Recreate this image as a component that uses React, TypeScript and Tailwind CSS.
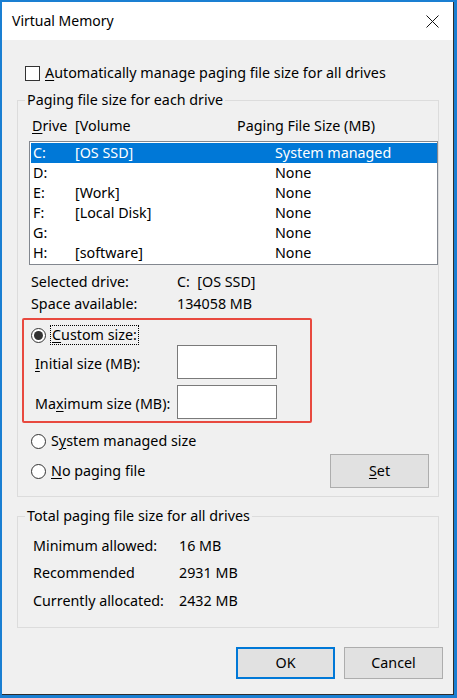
import type { ReactNode } from 'react';

const drives = [
    { drive: 'C:', volume: '[OS SSD]', size: 'System managed' },
    { drive: 'D:', volume: '', size: 'None' },
    { drive: 'E:', volume: '[Work]', size: 'None' },
    { drive: 'F:', volume: '[Local Disk]', size: 'None' },
    { drive: 'G:', volume: '', size: 'None' },
    { drive: 'H:', volume: '[software]', size: 'None' },
];

function U({ children }: { children: ReactNode }) {
    return <span className="underline decoration-1 underline-offset-[2px]">{children}</span>;
}

function Radio({ checked = false }: { checked?: boolean }) {
    return (
        <span className="w-[15px] h-[15px] rounded-full border border-[#333] bg-white flex items-center justify-center shrink-0">
            {checked && <span className="w-[9px] h-[9px] rounded-full bg-[#333]" />}
        </span>
    );
}

function App() {
    return (
        <div className="w-[457px] h-[698px] bg-[#1a7fd2] pt-[2px] pl-[2px] pr-[3px] pb-[3px] font-['Noto_Sans',sans-serif] text-[14.3px] leading-[20px] text-black">
            <div className="w-full h-full flex flex-col bg-[#f0f0f0] border-r border-b border-[#2d2d2d]">
                {/* Title bar */}
                <div className="h-[38px] bg-white flex items-center justify-between pl-[10px] pr-[14px] shrink-0">
                    <span className="text-[14px]">Virtual Memory</span>
                    <svg width="13" height="13" viewBox="0 0 13 13" className="text-[#111]">
                        <path d="M0.5 0.5 L12.5 12.5 M12.5 0.5 L0.5 12.5" stroke="currentColor" strokeWidth="1" />
                    </svg>
                </div>

                {/* Auto manage checkbox */}
                <div className="flex items-center mt-[23px] ml-[23px] h-[20px]">
                    <span className="w-[15px] h-[15px] border border-[#333] bg-white shrink-0" />
                    <span className="ml-[5px]">
                        <U>A</U>utomatically manage paging file size for all drives
                    </span>
                </div>

                {/* Paging file size for each drive */}
                <fieldset className="ml-[15px] w-[422px] mt-[7px] border border-[#dcdcdc] pb-[8px]">
                    <legend className="ml-[7px] px-[2px] leading-[20px]">Paging file size for each drive</legend>

                    <div className="grid grid-cols-[43px_162px_1fr] pl-[14px] mt-[6px] h-[20px]">
                        <span>
                            <U>D</U>rive
                        </span>
                        <span>[Volume</span>
                        <span>Paging File Size (MB)</span>
                    </div>

                    <div className="ml-[11px] w-[409px] mt-[5px] border border-[#82878f] bg-white p-[1px] pr-0">
                        {drives.map((d, i) => (
                            <div
                                key={d.drive}
                                className={`grid grid-cols-[42px_200px_1fr] pl-[2px] h-[20px] ${
                                    i === 0 ? 'bg-[#0078d7] text-white' : ''
                                }`}
                            >
                                <span>{d.drive}</span>
                                <span>{d.volume}</span>
                                <span>{d.size}</span>
                            </div>
                        ))}
                    </div>

                    <div className="flex ml-[13px] mt-[7px] h-[20px]">
                        <span className="w-[146px]">Selected drive:</span>
                        <span>C:&nbsp;&nbsp;[OS SSD]</span>
                    </div>
                    <div className="flex ml-[13px] mt-[2px] h-[20px]">
                        <span className="w-[146px]">Space available:</span>
                        <span>134058 MB</span>
                    </div>

                    {/* Highlighted custom size block */}
                    <div className="ml-[4px] w-[290px] mt-[4px] border-2 border-[#e8493f] rounded-[2px] pb-[2px]">
                        <div className="flex items-center pl-[7px] mt-[5px] h-[20px]">
                            <Radio checked />
                            <span className="ml-[4px] px-[1px] border border-dotted border-black leading-[18px]">
                                <U>C</U>ustom size:
                            </span>
                        </div>
                        <div className="flex items-center ml-[11px]">
                            <span className="w-[142px] pt-[3px]">
                                <U>I</U>nitial size (MB):
                            </span>
                            <div className="w-[100px] h-[34px] bg-white border border-[#7a7a7a]" />
                        </div>
                        <div className="flex items-center ml-[11px] mt-[6px]">
                            <span className="w-[142px] pt-[3px]">
                                Ma<U>x</U>imum size (MB):
                            </span>
                            <div className="w-[100px] h-[34px] bg-white border border-[#7a7a7a]" />
                        </div>
                    </div>

                    <div className="flex items-center ml-[13px] mt-[8px] h-[20px]">
                        <Radio />
                        <span className="ml-[5px]">
                            S<U>y</U>stem managed size
                        </span>
                    </div>
                    <div className="flex items-center justify-between ml-[13px] mr-[9px] mt-[3px]">
                        <div className="flex items-center">
                            <Radio />
                            <span className="ml-[5px]">
                                <U>N</U>o paging file
                            </span>
                        </div>
                        <button className="w-[99px] h-[34px] bg-[#e1e1e1] border border-[#adadad]">
                            <U>S</U>et
                        </button>
                    </div>
                </fieldset>

                {/* Totals */}
                <fieldset className="ml-[15px] w-[422px] mt-[9px] border border-[#dcdcdc] pb-[16px]">
                    <legend className="ml-[7px] px-[2px] leading-[20px]">Total paging file size for all drives</legend>
                    <div className="flex ml-[15px] mt-[10px] h-[20px]">
                        <span className="w-[146px]">Minimum allowed:</span>
                        <span>16 MB</span>
                    </div>
                    <div className="flex ml-[15px] mt-[7px] h-[20px]">
                        <span className="w-[146px]">Recommended</span>
                        <span>2931 MB</span>
                    </div>
                    <div className="flex ml-[15px] mt-[8px] h-[20px]">
                        <span className="w-[146px]">Currently allocated:</span>
                        <span>2432 MB</span>
                    </div>
                </fieldset>

                {/* Dialog buttons */}
                <div className="flex justify-end gap-[9px] mr-[10px] mt-[19px]">
                    <button className="w-[99px] h-[32px] bg-[#e1e1e1] border-2 border-[#0078d7]">OK</button>
                    <button className="w-[99px] h-[32px] bg-[#e1e1e1] border border-[#adadad]">Cancel</button>
                </div>
            </div>
        </div>
    );
}

export default App;
